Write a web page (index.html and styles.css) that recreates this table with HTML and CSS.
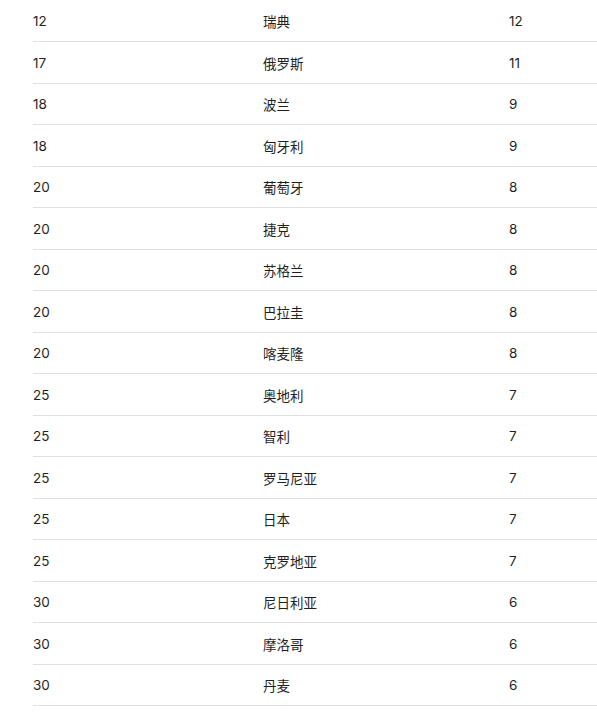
FILE: index.html
```html
<!DOCTYPE html>
<html lang="zh">
<head>
<meta charset="utf-8">
<link rel="stylesheet" href="styles.css">
</head>
<body>
<div class="table">
  <div class="row"><span>12</span><span>瑞典</span><span>12</span></div>
  <div class="row"><span>17</span><span>俄罗斯</span><span>11</span></div>
  <div class="row"><span>18</span><span>波兰</span><span>9</span></div>
  <div class="row"><span>18</span><span>匈牙利</span><span>9</span></div>
  <div class="row"><span>20</span><span>葡萄牙</span><span>8</span></div>
  <div class="row"><span>20</span><span>捷克</span><span>8</span></div>
  <div class="row"><span>20</span><span>苏格兰</span><span>8</span></div>
  <div class="row"><span>20</span><span>巴拉圭</span><span>8</span></div>
  <div class="row"><span>20</span><span>喀麦隆</span><span>8</span></div>
  <div class="row"><span>25</span><span>奥地利</span><span>7</span></div>
  <div class="row"><span>25</span><span>智利</span><span>7</span></div>
  <div class="row"><span>25</span><span>罗马尼亚</span><span>7</span></div>
  <div class="row"><span>25</span><span>日本</span><span>7</span></div>
  <div class="row"><span>25</span><span>克罗地亚</span><span>7</span></div>
  <div class="row"><span>30</span><span>尼日利亚</span><span>6</span></div>
  <div class="row"><span>30</span><span>摩洛哥</span><span>6</span></div>
  <div class="row"><span>30</span><span>丹麦</span><span>6</span></div>
</div>
</body>
</html>
```

FILE: styles.css
```css
html, body {
  margin: 0;
  padding: 0;
  background: #ffffff;
}
body {
  padding-left: 33px;
  padding-top: 0.5px;
  font-family: Inter, "Noto Sans CJK SC", sans-serif;
  font-size: 13.5px;
  color: #1f1f1f;
}
.table {
  display: flex;
  flex-direction: column;
}
.row {
  display: grid;
  grid-template-columns: 230px 246px 1fr;
  align-items: center;
  height: 40.5px;
  padding-top: 0.5px;
  box-sizing: border-box;
  height: 41.5px;
  border-bottom: 1px solid #e0e0e0;
}
```
